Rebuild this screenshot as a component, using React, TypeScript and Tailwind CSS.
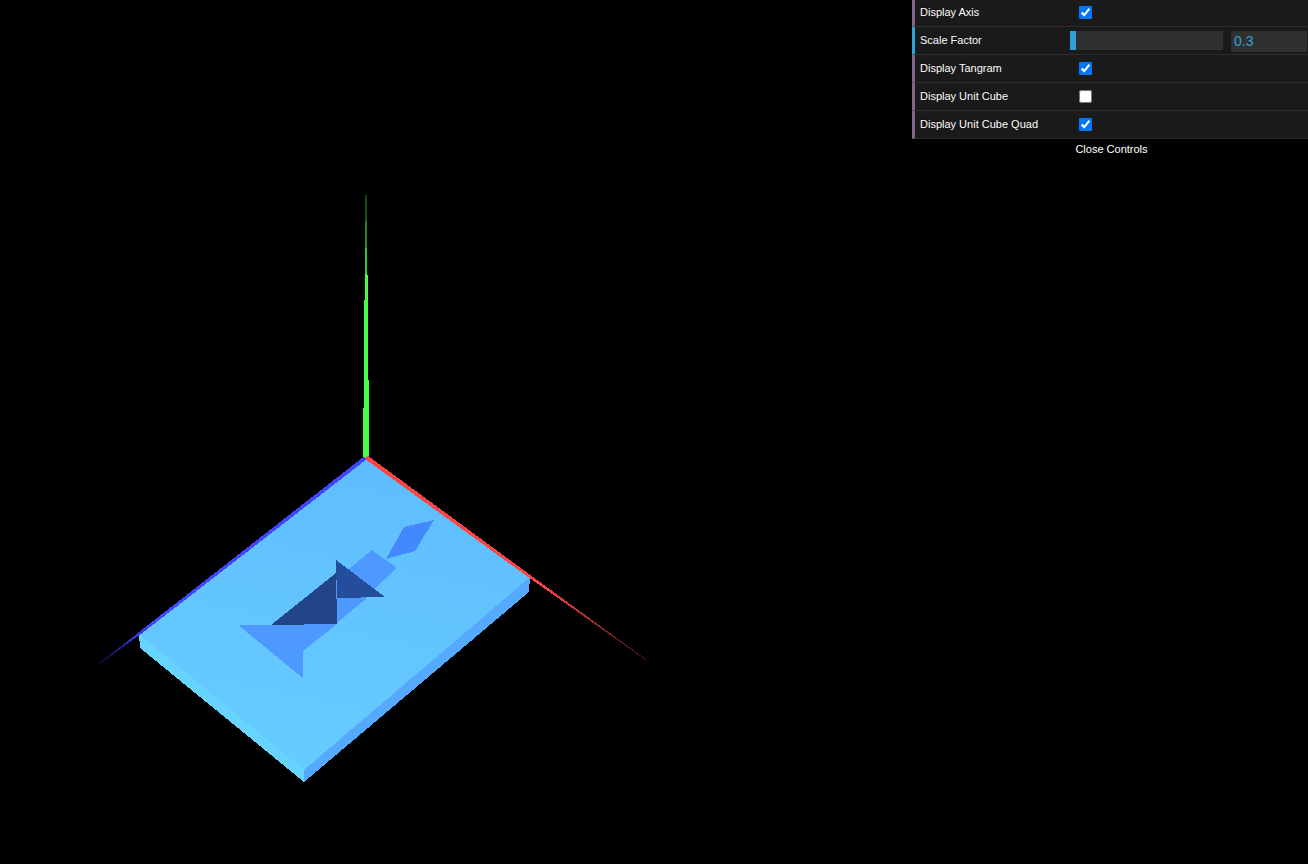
import React from "react";

const rows = [
  { label: "Display Axis", checked: true },
  { label: "Scale Factor", slider: true },
  { label: "Display Tangram", checked: true },
  { label: "Display Unit Cube", checked: false },
  { label: "Display Unit Cube Quad", checked: true },
];

function Scene() {
  return (
    <svg className="absolute inset-0" width="1308" height="864" viewBox="0 0 1308 864" shapeRendering="crispEdges">
      <defs>
        <linearGradient id="plateTop" gradientUnits="userSpaceOnUse" x1="366" y1="458" x2="304" y2="770">
          <stop offset="0" stopColor="#5fbdff" />
          <stop offset="1" stopColor="#66ccff" />
        </linearGradient>
        <linearGradient id="greenAxis" gradientUnits="userSpaceOnUse" x1="366" y1="195" x2="366" y2="458">
          <stop offset="0" stopColor="#174417" />
          <stop offset="0.1" stopColor="#1c501c" />
          <stop offset="0.1" stopColor="#268026" />
          <stop offset="0.2" stopColor="#2a8a2a" />
          <stop offset="0.2" stopColor="#33c433" />
          <stop offset="0.3" stopColor="#36cc36" />
          <stop offset="0.3" stopColor="#44ff44" />
          <stop offset="1" stopColor="#44ff44" />
        </linearGradient>
        <linearGradient id="redAxis" gradientUnits="userSpaceOnUse" x1="366" y1="458" x2="647" y2="661">
          <stop offset="0" stopColor="#ff4444" />
          <stop offset="0.62" stopColor="#ff4444" />
          <stop offset="1" stopColor="#401010" />
        </linearGradient>
        <linearGradient id="blueAxis" gradientUnits="userSpaceOnUse" x1="366" y1="458" x2="97" y2="665">
          <stop offset="0" stopColor="#4444ff" />
          <stop offset="0.8" stopColor="#4444ff" />
          <stop offset="1" stopColor="#0c0c40" />
        </linearGradient>
      </defs>

      {/* plate */}
      <polygon points="139,634 304,770 304,782 140,648" fill="#66d4ff" />
      <polygon points="304,770 530,577 529,592 304,782" fill="#55aaff" />
      <polygon points="366,458 530,577 304,770 139,634" fill="url(#plateTop)" />

      {/* tangram */}
      <polygon points="404,527 434,520 415,551 386,559" fill="#4488ff" />
      <polygon points="372,550 397,568 337,623 311,600" fill="#4d99ff" />
      <polygon points="238,625 337,624 303,651 303,678" fill="#4d99ff" />
      <polygon points="337,598 368,597 337,623" fill="#4d99ff" />
      <polygon points="271,625 336,573 337,624" fill="#224488" />
      <polygon points="336,560 385,597 337,598" fill="#244e9c" />

      {/* axes */}
      <polygon
        points="365,195 367,195 367,275 368,275 368,380 369,380 369,458 363,458 363,408 364,408 364,300 365,300"
        fill="url(#greenAxis)"
      />
      <polygon points="367.5,455.5 531,575.5 647,660 647,661 529.5,578 365,459" fill="url(#redAxis)" />
      <polygon points="364,456.5 139,632 97,665 97.5,665.5 141,634 367,459" fill="url(#blueAxis)" />
    </svg>
  );
}

export default function App() {
  return (
    <div className="relative h-[864px] w-full overflow-hidden bg-black font-['Liberation_Sans',Arial,sans-serif]">
      <Scene />
      <div className="absolute top-0 right-0 -mt-px w-[396px] text-[11px] text-white">
        {rows.map((row) => (
          <div
            key={row.label}
            className={
              row.slider
                ? "flex h-[28px] items-center border-b border-l-[3px] border-b-[#2c2c2c] border-l-[#2fa1d6] bg-[#1a1a1a] pl-[5px]"
                : "flex h-[28px] items-center border-b border-l-[3px] border-b-[#2c2c2c] border-l-[#806787] bg-[#1a1a1a] pl-[5px]"
            }
          >
            <span className="w-[150px] shrink-0 [text-shadow:0_-1px_0_#111]">{row.label}</span>
            {row.slider ? (
              <div className="flex flex-1 items-start gap-2 pt-px">
                <div className="h-[19px] w-[153px] bg-[#303030]">
                  <div className="h-full w-[6px] bg-[#2fa1d6]" />
                </div>
                <div className="h-[21px] w-[76px] bg-[#303030] pl-[3px] pt-px text-[14px] leading-[19px] text-[#2fa1d6]">
                  0.3
                </div>
              </div>
            ) : (
              <input
                type="checkbox"
                defaultChecked={row.checked}
                className="m-0 ml-[9px] h-[13px] w-[13px]"
              />
            )}
          </div>
        ))}
        <div className="flex h-[20px] items-center justify-center bg-black pl-[3px] text-white [text-shadow:0_-1px_0_#111]">
          Close Controls
        </div>
      </div>
    </div>
  );
}
